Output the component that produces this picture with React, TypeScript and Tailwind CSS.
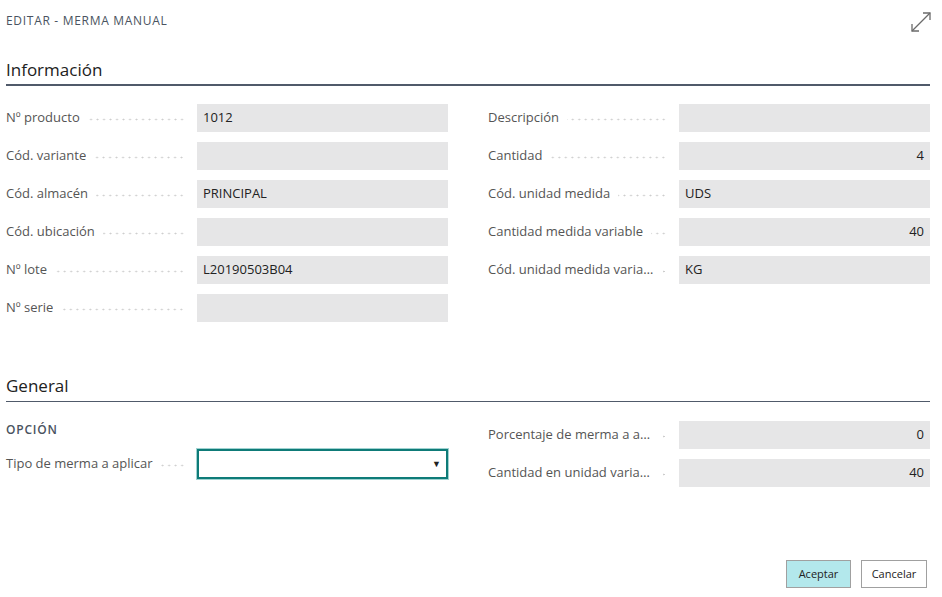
import React from "react";

const font = { fontFamily: '"Open Sans", "Noto Sans", sans-serif' };

function Dots() {
  return (
    <span className="ml-2 mr-3 mt-[3px] h-[3px] flex-1 self-center [background-image:radial-gradient(circle,#cdcdcd_0.8px,transparent_1.1px)] [background-size:6.5px_3px] [background-repeat:repeat-x] [background-position:right_center]" />
  );
}

function Field({ label, value = "", right = false }: { label: string; value?: string; right?: boolean }) {
  return (
    <div className="flex h-[28px] items-center">
      <div className="flex w-[191px] shrink-0 items-center">
        <span className="max-w-[166px] truncate text-[13px] text-[#555]">{label}</span>
        <Dots />
      </div>
      <div
        className={`flex h-[28px] w-[251px] items-center bg-[#e6e6e7] px-[6px] text-[13px] text-[#222] ${
          right ? "justify-end" : ""
        }`}
      >
        {value}
      </div>
    </div>
  );
}

export default function App() {
  return (
    <div className="relative h-[597px] w-[942px] bg-white" style={font}>
      <div className="pl-[6px] pr-[12px]">
        <div className="flex h-[42px] items-center justify-between">
          <span className="text-[12px] font-medium tracking-[0.7px] text-[#4a5360]">EDITAR - MERMA MANUAL</span>
          <svg width="24" height="24" viewBox="0 0 24 24" className="mr-[-3px] mt-[2px]" fill="none" stroke="#6b6b6b" strokeWidth="1.3">
            <path d="M3 21 L21 3" />
            <path d="M14 3 H21 V10" />
            <path d="M3 14 V21 H10" />
          </svg>
        </div>
        <div className="mt-[16px] border-b-2 border-[#505a6a] pb-[2px] text-[17px] leading-[24px] text-[#212121]">Información</div>
        <div className="mt-[18px] flex justify-between">
          <div className="flex w-[442px] flex-col gap-[10px]">
            <Field label="Nº producto" value="1012" />
            <Field label="Cód. variante" />
            <Field label="Cód. almacén" value="PRINCIPAL" />
            <Field label="Cód. ubicación" />
            <Field label="Nº lote" value="L20190503B04" />
            <Field label="Nº serie" />
          </div>
          <div className="flex w-[442px] flex-col gap-[10px]">
            <Field label="Descripción" />
            <Field label="Cantidad" value="4" right />
            <Field label="Cód. unidad medida" value="UDS" />
            <Field label="Cantidad medida variable" value="40" right />
            <Field label="Cód. unidad medida variable" value="KG" />
          </div>
        </div>
        <div className="mt-[52px] border-b border-[#505a6a] pb-[3px] text-[17px] leading-[24px] text-[#212121]">General</div>
        <div className="mt-[18px] flex justify-between">
          <div className="flex w-[442px] flex-col">
            <div className="h-[29px] pt-[1px] text-[12px] font-semibold tracking-[0.8px] text-[#4a5360]">OPCIÓN</div>
            <div className="flex h-[30px] items-center">
              <div className="flex w-[191px] shrink-0 items-center">
                <span className="text-[13px] text-[#555]">Tipo de merma a aplicar</span>
                <Dots />
              </div>
              <div className="flex h-[30px] w-[251px] items-center justify-end border-2 border-[#0e7b78] pr-[5px] shadow-[0_0_0_1px_#9fd3d1]">
                <span className="text-[9px] text-[#222]">▼</span>
              </div>
            </div>
          </div>
          <div className="mt-[1px] flex w-[442px] flex-col gap-[10px]">
            <Field label="Porcentaje de merma a aplicar" value="0" right />
            <Field label="Cantidad en unidad variable" value="40" right />
          </div>
        </div>
        <div className="mt-[73px] flex justify-end gap-[10px] pr-[3px]">
          <button className="h-[28px] w-[65px] border border-[#a0a0a0] bg-[#b3e8ec] text-[11px] text-[#222]">Aceptar</button>
          <button className="h-[28px] w-[66px] border border-[#a0a0a0] bg-white text-[11px] text-[#222]">Cancelar</button>
        </div>
      </div>
    </div>
  );
}
